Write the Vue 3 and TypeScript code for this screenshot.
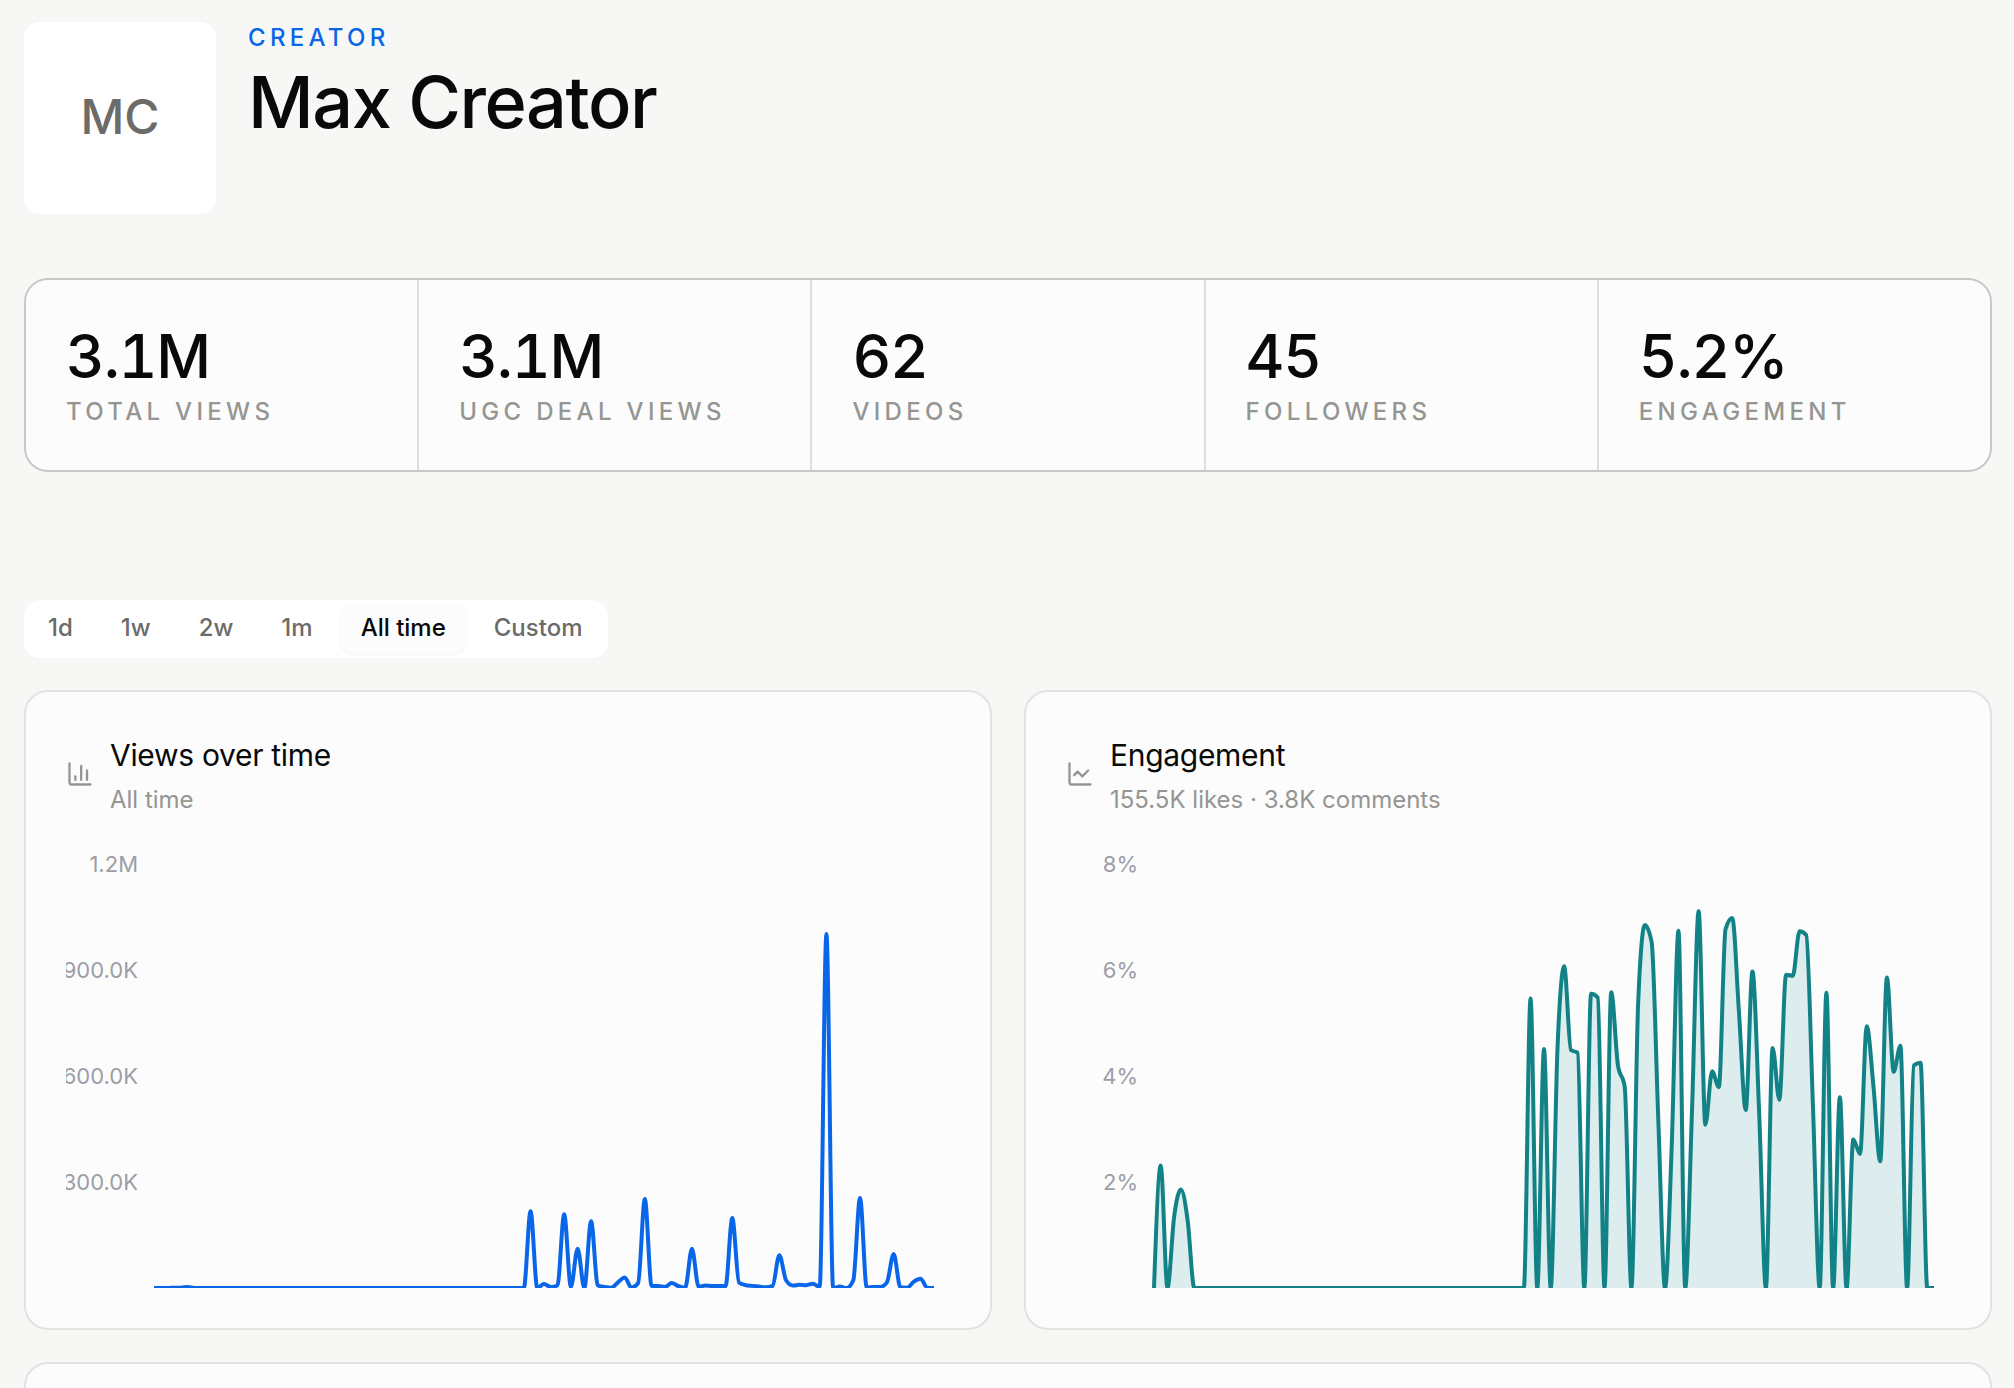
<script setup lang="ts">
import { ref } from 'vue'

interface Stat { value: string; label: string }
interface Chart {
  id: string
  title: string
  subtitle: string
  icon: string[]
  ticks: string[]
  max: number
  values: number[]
  color: string
  filled: boolean
}

const stats: Stat[] = [
  { value: '3.1M', label: 'Total views' },
  { value: '3.1M', label: 'UGC deal views' },
  { value: '62', label: 'Videos' },
  { value: '45', label: 'Followers' },
  { value: '5.2%', label: 'Engagement' },
]

const ranges = ['1d', '1w', '2w', '1m', 'All time', 'Custom']
const selected = ref('All time')

const zeros = (n: number): number[] => Array.from({ length: n }, () => 0)

// Daily views, in thousands
const views: number[] = [
  0, 0, 0, 1, 1, 3, ...zeros(50),
  217, 0, 11, 3, 7, 209, 3, 111, 0, 189, 7, 3, 1, 16, 30, 1, 14, 252, 6, 6,
  3, 14, 5, 1, 111, 3, 7, 6, 6, 5, 198, 15, 8, 6, 4, 2, 6, 93, 22, 7,
  9, 8, 12, 3, 1002, 0, 4, 0, 22, 255, 1, 3, 3, 16, 96, 2, 1, 18, 26, 1, 0,
]

// Daily engagement rate, in percent
const engagement: number[] = [
  0, 2.31, 0, 1.35, 1.86, 1.28, ...zeros(50),
  5.46, 0, 4.51, 0, 4.5, 6.07, 4.49, 4.44, 0, 5.55, 5.48, 0, 5.58, 4.2, 3.8, 0,
  5.37, 6.85, 6.53, 3.17, 0, 2.7, 6.74, 0, 3.3, 7.11, 3.08, 4.09, 3.79, 6.77,
  6.98, 5.19, 3.36, 5.97, 3.3, 0, 4.53, 3.55, 5.91, 5.89, 6.73, 6.66, 3.42, 0,
  5.57, 0, 3.6, 0, 2.8, 2.53, 4.94, 3.8, 2.39, 5.86, 4.08, 4.57, 0, 4.2, 4.25, 0, 0,
]

const charts: Chart[] = [
  {
    id: 'views',
    title: 'Views over time',
    subtitle: 'All time',
    icon: ['M3 3v16a2 2 0 0 0 2 2h16', 'M18 17V9', 'M13 17V5', 'M8 17v-3'],
    ticks: ['1.2M', '900.0K', '600.0K', '300.0K'],
    max: 1200,
    values: views,
    color: '#0a66e8',
    filled: false,
  },
  {
    id: 'engagement',
    title: 'Engagement',
    subtitle: '155.5K likes · 3.8K comments',
    icon: ['M3 3v16a2 2 0 0 0 2 2h16', 'm19 9-5 5-4-4-3 3'],
    ticks: ['8%', '6%', '4%', '2%'],
    max: 8,
    values: engagement,
    color: '#128287',
    filled: true,
  },
]

const plot = { left: 88, top: 16, width: 780, height: 424 }
const bottom = plot.top + plot.height

// Monotone cubic interpolation through evenly spaced points
function linePath(values: number[], max: number): string {
  const step = plot.width / (values.length - 1)
  const ys = values.map((v) => bottom - (v / max) * plot.height)
  const slopes = ys.slice(1).map((y, i) => (y - ys[i]) / step)
  const inner = slopes.slice(1).map((s1, i) => {
    const s0 = slopes[i]
    const mean = (s0 + s1) / 2
    return (Math.sign(s0) + Math.sign(s1)) * Math.min(Math.abs(s0), Math.abs(s1), 0.5 * Math.abs(mean))
  })
  const first = (3 * slopes[0] - inner[0]) / 2
  const last = (3 * slopes[slopes.length - 1] - inner[inner.length - 1]) / 2
  const t = [first, ...inner, last]
  const f = (n: number) => n.toFixed(2)
  let d = `M${f(plot.left)},${f(ys[0])}`
  for (let i = 1; i < ys.length; i++) {
    const x0 = plot.left + (i - 1) * step
    const x1 = x0 + step
    const k = step / 3
    d += `C${f(x0 + k)},${f(ys[i - 1] + k * t[i - 1])},${f(x1 - k)},${f(ys[i] - k * t[i])},${f(x1)},${f(ys[i])}`
  }
  return d
}

function areaPath(values: number[], max: number): string {
  return `${linePath(values, max)}L${plot.left + plot.width},${bottom}L${plot.left},${bottom}Z`
}
</script>

<template>
  <main class="page">
    <header class="profile">
      <div class="avatar" aria-hidden="true">MC</div>
      <div>
        <p class="eyebrow">Creator</p>
        <h1 class="name">Max Creator</h1>
      </div>
    </header>

    <dl class="stats">
      <div v-for="stat in stats" :key="stat.label" class="stat">
        <dt class="stat-label">{{ stat.label }}</dt>
        <dd class="stat-value">{{ stat.value }}</dd>
      </div>
    </dl>

    <div class="ranges" role="group" aria-label="Time range">
      <button
        v-for="range in ranges"
        :key="range"
        type="button"
        class="range"
        :class="{ active: range === selected }"
        :aria-pressed="range === selected"
        @click="selected = range"
      >{{ range }}</button>
    </div>

    <div class="charts">
      <section v-for="chart in charts" :key="chart.id" class="card" :aria-labelledby="chart.id">
        <div class="card-head">
          <svg class="icon" viewBox="0 0 24 24" aria-hidden="true">
            <path v-for="d in chart.icon" :key="d" :d="d" />
          </svg>
          <div>
            <h2 :id="chart.id" class="card-title">{{ chart.title }}</h2>
            <p class="card-sub">{{ chart.subtitle }}</p>
          </div>
        </div>
        <svg class="chart" viewBox="0 0 884 440" role="img" :aria-label="chart.title">
          <text
            v-for="(tick, i) in chart.ticks"
            :key="tick"
            class="tick"
            x="72"
            :y="plot.top + i * 106 + 8"
          >{{ tick }}</text>
          <path v-if="chart.filled" :d="areaPath(chart.values, chart.max)" :fill="chart.color" fill-opacity="0.13" />
          <path class="line" :d="linePath(chart.values, chart.max)" :stroke="chart.color" />
        </svg>
      </section>
    </div>

    <section class="card next" aria-label="More"></section>
  </main>
</template>

<style>
body {
  background: #f7f7f5;
}
</style>

<style scoped>
.page {
  box-sizing: border-box;
  display: flex;
  flex-direction: column;
  min-height: 100vh;
  padding: 22px 22px 0 24px;
  font-family: Inter, "Liberation Sans", sans-serif;
  font-size: 24px;
  color: #080a09;
}
h1, h2, p, dl, dd {
  margin: 0;
}
.profile {
  display: flex;
  gap: 32px;
  margin-bottom: 64px;
}
.avatar {
  box-sizing: border-box;
  display: flex;
  align-items: center;
  justify-content: center;
  width: 192px;
  height: 192px;
  padding-bottom: 4px;
  border-radius: 16px;
  background: #fff;
  color: #6b6b69;
  font-size: 48px;
  font-weight: 500;
}
.eyebrow {
  line-height: 32px;
  font-weight: 500;
  letter-spacing: 0.18em;
  text-transform: uppercase;
  color: #0a66e8;
}
.name {
  margin-top: 10px;
  font-size: 72px;
  line-height: 76px;
  font-weight: 500;
  letter-spacing: -0.02em;
}
.stats {
  display: grid;
  grid-template-columns: repeat(5, 1fr);
  gap: 2px;
  margin-bottom: 128px;
  overflow: hidden;
  border: 2px solid #c8c8c6;
  border-radius: 24px;
  background: #dededc;
}
.stat {
  display: flex;
  flex-direction: column-reverse;
  padding: 40px 40px 38px;
  background: #fcfcfc;
}
.stat-value {
  font-size: 60px;
  line-height: 72px;
  font-weight: 500;
  letter-spacing: -0.02em;
  font-variant-numeric: tabular-nums;
}
.stat-label {
  line-height: 40px;
  font-weight: 500;
  letter-spacing: 0.18em;
  text-transform: uppercase;
  white-space: nowrap;
  color: #959592;
}
.ranges {
  display: flex;
  align-self: flex-start;
  gap: 4px;
  margin-bottom: 32px;
  padding: 4px 4px 4px 2px;
  border-radius: 16px;
  background: #fff;
}
.range {
  padding: 9px 22px 11px;
  border: 0;
  border-radius: 16px;
  background: transparent;
  font: inherit;
  font-weight: 500;
  line-height: 30px;
  color: #6b6b69;
  cursor: pointer;
}
.range.active {
  background: #fcfcfc;
  color: #080a09;
  box-shadow: 0 1px 2px rgba(0, 0, 0, 0.05);
}
.charts {
  display: grid;
  grid-template-columns: 1fr 1fr;
  gap: 32px;
  margin-bottom: 32px;
}
.card {
  padding: 40px;
  border: 2px solid #e2e2e0;
  border-radius: 24px;
  background: #fcfcfc;
}
.card-head {
  display: flex;
  align-items: center;
  gap: 16px;
  margin-bottom: 32px;
}
.icon {
  width: 28px;
  height: 28px;
  fill: none;
  stroke: #959592;
  stroke-width: 2;
  stroke-linecap: round;
  stroke-linejoin: round;
}
.card-title {
  font-size: 30px;
  line-height: 46px;
  font-weight: 400;
  letter-spacing: -0.01em;
}
.card-sub {
  margin-top: 6px;
  line-height: 32px;
  color: #959592;
}
.chart {
  display: block;
  width: 100%;
}
.tick {
  font-size: 22px;
  text-anchor: end;
  fill: #9b9ea6;
}
.line {
  fill: none;
  stroke-width: 4;
}
.next {
  flex: 1;
  padding: 0;
  border-bottom: 0;
  border-radius: 24px 24px 0 0;
}
</style>
